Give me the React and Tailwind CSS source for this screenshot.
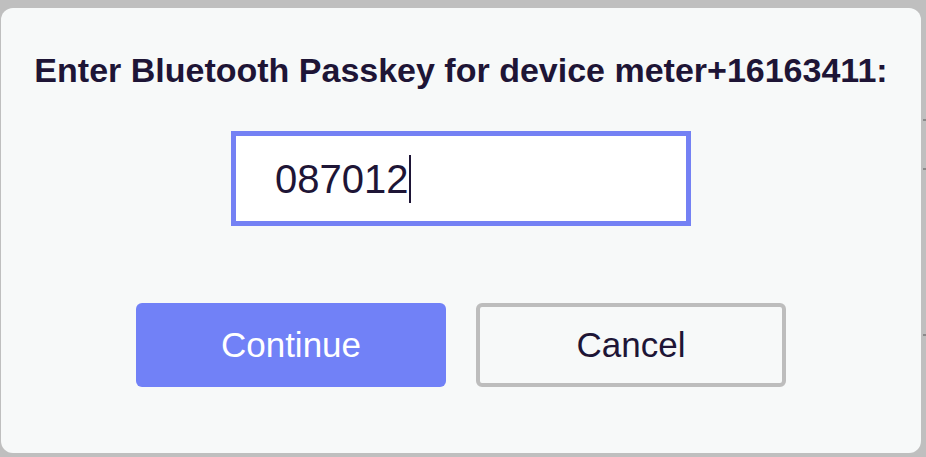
export default function App() {
  return (
    <div className="relative w-[926px] h-[457px] bg-[#bfbfbf] overflow-hidden pt-[8px] pl-[1px]">
      <div className="w-[920px] h-[445px] rounded-[12px] bg-[#f7f9f9] flex flex-col items-center pt-[42px]">
        <h1
          className="text-[34px] leading-[40px] font-bold text-[#1e1536] whitespace-nowrap"
          style={{ fontFamily: '"Liberation Sans", Arial, sans-serif' }}
        >
          Enter Bluetooth Passkey for device meter+16163411:
        </h1>
        <div className="mt-[41px] w-[460px] h-[95px] border-[5px] border-[#7481f4] bg-white flex items-center pl-[39px]">
          <span
            className="text-[40px] leading-none text-[#1e1536]"
            style={{ fontFamily: '"Liberation Sans", Arial, sans-serif' }}
          >
            087012
          </span>
          <span className="ml-[1px] w-[2px] h-[48px] bg-[#1e1536]"></span>
        </div>
        <div className="mt-[77px] flex gap-[30px]">
          <button
            className="w-[310px] h-[84px] rounded-[6px] bg-[#7181f7] text-white text-[35px]"
            style={{ fontFamily: '"Liberation Sans", Arial, sans-serif' }}
          >
            Continue
          </button>
          <button
            className="w-[310px] h-[84px] rounded-[6px] border-[4px] border-[#bdbdbd] bg-[#f7f9f9] text-[#1e1536] text-[35px]"
            style={{ fontFamily: '"Liberation Sans", Arial, sans-serif' }}
          >
            Cancel
          </button>
        </div>
      </div>
      <span className="absolute left-[923px] top-[119px] w-[3px] h-[2px] bg-[#8a8a8a]"></span>
      <span className="absolute left-[923px] top-[168px] w-[3px] h-[2px] bg-[#8a8a8a]"></span>
      <span className="absolute left-[923px] top-[334px] w-[3px] h-[2px] bg-[#8a8a8a]"></span>
    </div>
  );
}
